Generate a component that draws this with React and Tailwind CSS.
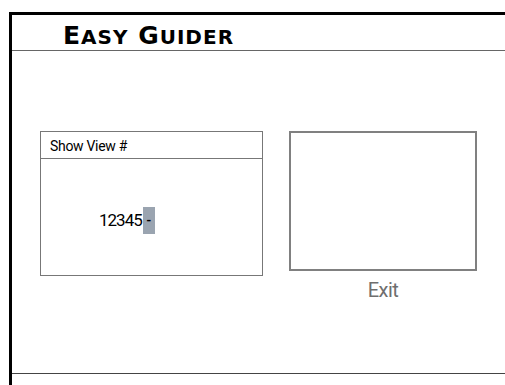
export default function App() {
  return (
    <div className="w-[505px] h-[385px] bg-white pt-[12px] pl-[9px] overflow-hidden">
      <div className="h-full border-l-[3px] border-t-[3px] border-black flex flex-col">
        <div className="h-[36px] border-b border-[#666] pl-[51px] flex items-end pb-[2px]">
          <h1
            className="text-[25px] leading-none font-bold text-black tracking-[1px] whitespace-nowrap"
            style={{ fontFamily: '"DejaVu Sans", sans-serif' }}
          >
            E<span className="text-[20px]">ASY</span> G<span className="text-[20px]">UIDER</span>
          </h1>
        </div>
        <div className="flex-1 flex items-start pl-[28px] pt-[80px] gap-[26px]">
          <div className="w-[223px] h-[145px] border-[1.5px] border-[#777] flex flex-col">
            <div
              className="h-[27px] border-b-[1.5px] border-[#777] pl-[9px] pt-[3px] flex items-center text-[14px] text-black tracking-[-0.3px]"
              style={{ fontFamily: "Roboto, sans-serif" }}
            >
              Show View #
            </div>
            <div className="flex-1 flex items-center pl-[58px] pt-[7px]">
              <span
                className="text-[17px] text-black tracking-[-1px]"
                style={{ fontFamily: "Roboto, sans-serif" }}
              >
                12345
              </span>
              <span
                className="w-[12px] h-[27px] bg-[#9aa4b0] flex items-center justify-center text-[13px] text-black font-bold ml-[1px]"
                style={{ fontFamily: "Roboto, sans-serif" }}
              >
                -
              </span>
            </div>
          </div>
          <div className="flex flex-col items-center">
            <div className="w-[188px] h-[140px] border-2 border-[#808080]"></div>
            <div
              className="mt-[4px] text-[20px] text-[#6e6e6e] tracking-[-0.6px]"
              style={{ fontFamily: "Roboto, sans-serif" }}
            >
              Exit
            </div>
          </div>
        </div>
        <div className="h-[12px] border-t border-[#444]"></div>
      </div>
    </div>
  );
}
